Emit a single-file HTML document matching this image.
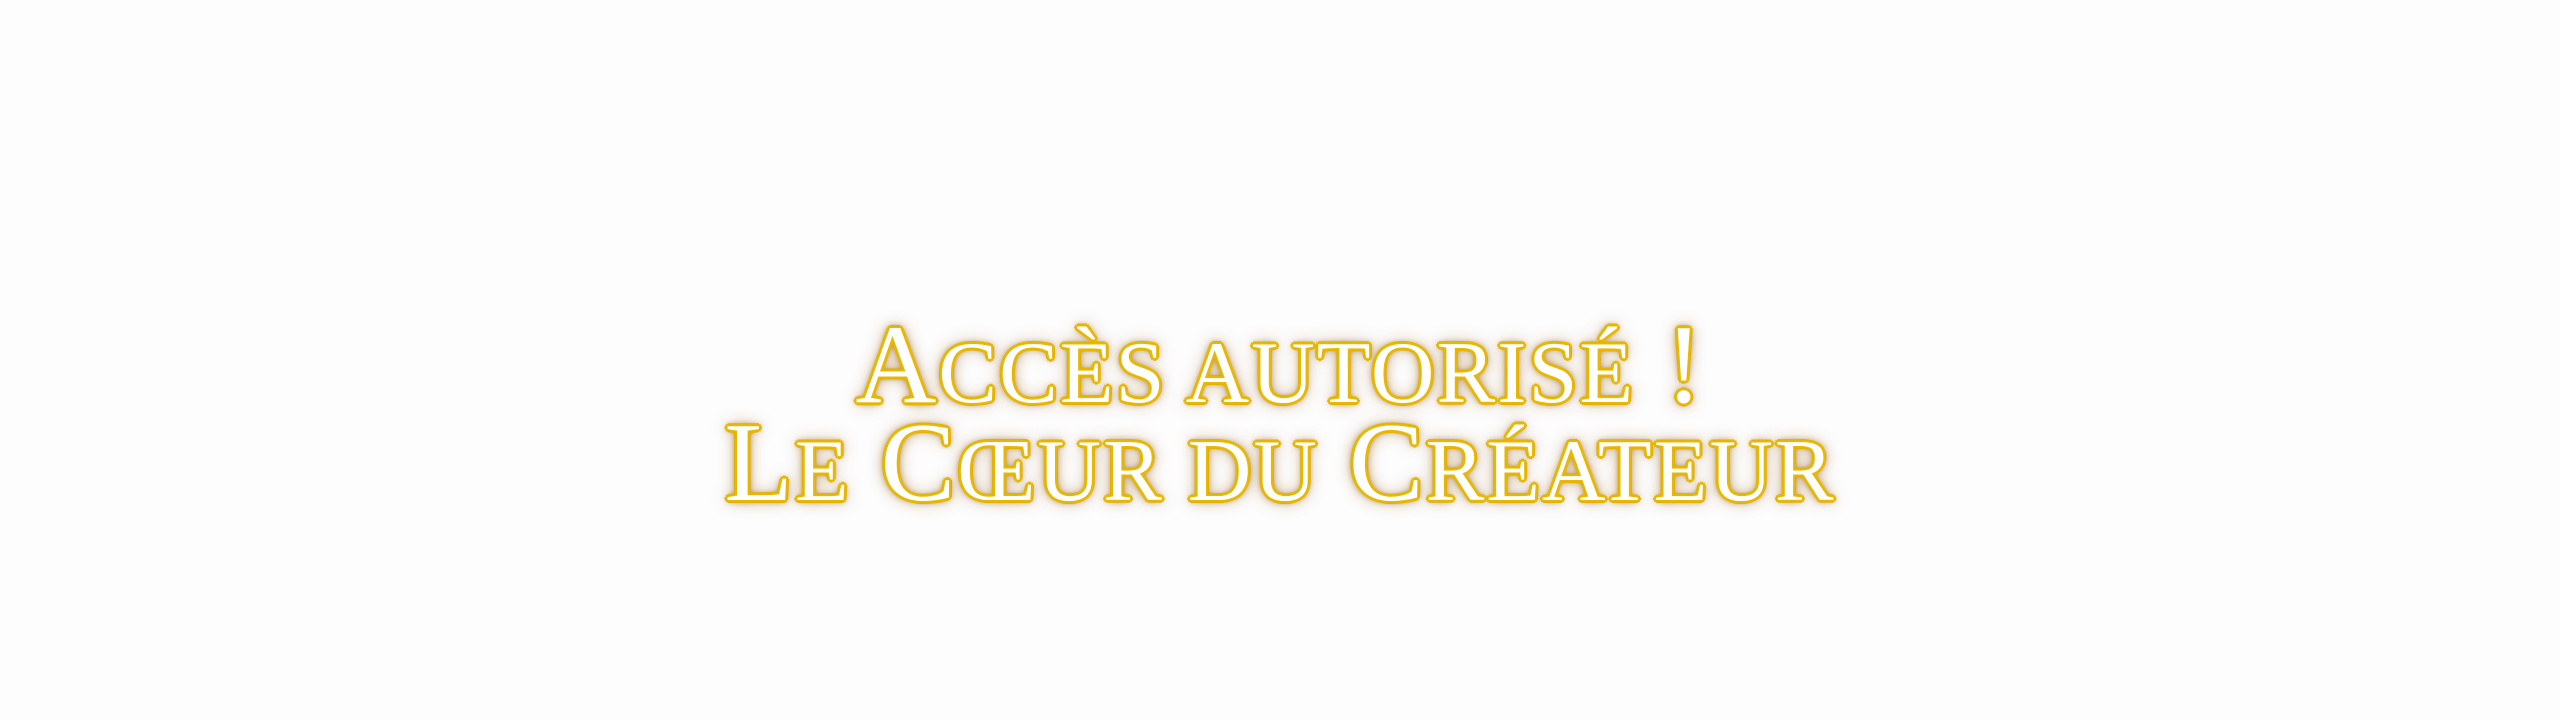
<!DOCTYPE html>
<html><head><meta charset="utf-8"><style>
html,body{margin:0;padding:0;width:2560px;height:720px;background:#fdfdfd;overflow:hidden}
.t{position:absolute;left:0;width:2560px;text-align:center;font-family:"Liberation Serif",serif;font-size:112px;line-height:98px;color:#fff;letter-spacing:2px;
text-shadow:
 2px 0 0 #e8b800,-2px 0 0 #e8b800,0 2px 0 #e8b800,0 -2px 0 #e8b800,
 2px 2px 0 #e8b800,-2px 2px 0 #e8b800,2px -2px 0 #e8b800,-2px -2px 0 #e8b800,
 3px 0 0 #e2b000,-3px 0 0 #e2b000,0 3px 0 #e2b000,0 -3px 0 #e2b000,
 0 0 7px rgba(130,70,0,1),0 0 16px rgba(150,90,0,.7);}
.s{font-size:88px}
</style></head><body>
<div class="t" style="top:316px">A<span class="s">CCÈS AUTORISÉ</span> !</div>
<div class="t" style="top:414px">L<span class="s">E</span> C<span class="s">ŒUR DU</span> C<span class="s">RÉATEUR</span></div>
</body></html>
